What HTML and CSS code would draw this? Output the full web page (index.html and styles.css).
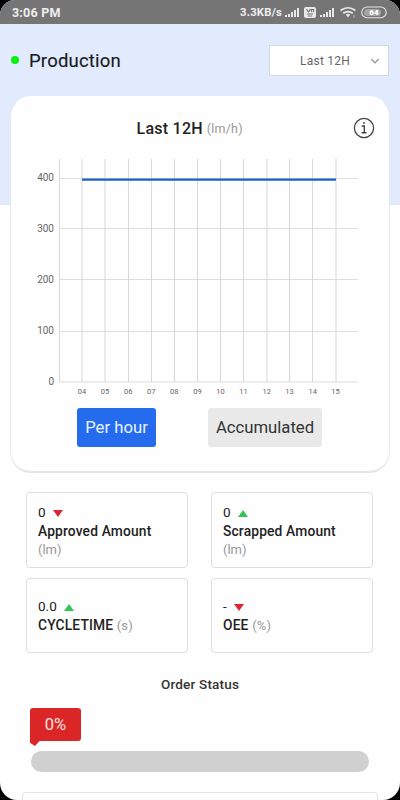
FILE: index.html
```html
<!DOCTYPE html>
<html lang="en">
<head>
<meta charset="utf-8">
<meta name="viewport" content="width=device-width">
<title>Production</title>
<link rel="stylesheet" href="styles.css">
</head>
<body>
<div class="screen">
  <header class="status">
    <span class="clock">3:06 PM</span>
    <div class="indicators">
      <span class="speed">3.3KB/s</span>
      <svg class="system-icons" width="103" height="16" viewBox="0 0 103 16">
        <g fill="#e8e8e8">
          <path d="M1 11h2v2H1zM4 10h2v3H4zM7 8h2v5H7zM10 6h2v7h-2zM13 4h2v9h-2z"/>
          <rect x="20" y="3" width="12" height="11" rx="2"/>
          <path d="M36 11h2v2h-2zM39 10h2v3h-2zM42 8h2v5h-2zM45 6h2v7h-2zM48 4h2v9h-2z"/>
          <path d="M61.800 10.500 64 13.500l2.200-3q-2.200-1.500-4.400 0z"/>
        </g>
        <path d="m22.500 5 2 3 2-3M27.500 8V5.500h2V8M23 10h6M24 12h4" fill="none" stroke="#777" stroke-width="1.200"/>
        <path d="M56.500 6.500q7.500-5.500 15 0M59.200 9.300q4.800-3.500 9.600 0" fill="none" stroke="#e8e8e8" stroke-width="1.700"/>
        <path d="M70 11v3" stroke="#bbb"/>
        <rect x="77.700" y="3" width="24.500" height="10.800" rx="5.400" fill="none" stroke="#e8e8e8" stroke-width="1.100"/>
        <rect x="80" y="5" width="17" height="7" rx="3.500" fill="#a5a5a5"/>
        <text x="90" y="11.300" text-anchor="middle" class="battery">64</text>
      </svg>
    </div>
  </header>
  <section class="title-bar">
    <span class="dot"></span>
    <h1>Production</h1>
    <div class="select"><span>Last 12H</span>
      <svg width="10" height="6" viewBox="0 0 10 6"><path d="m1.200 1 3.800 3.800L8.800 1" fill="none" stroke="#999" stroke-width="1.300"/></svg>
    </div>
  </section>
  <main>
    <section class="chart-card">
      <div class="chart-head">
        <h2>Last 12H</h2><span class="unit">(lm/h)</span>
        <svg class="info" width="22" height="22" viewBox="0 0 22 22" fill="none" stroke="#444">
          <circle cx="11" cy="11" r="9.600" stroke-width="1.300"/>
          <path d="M8.700 9h2.600v6.500M8.500 15.700h5" stroke-width="1.400"/>
          <circle cx="11" cy="6" r=".9" fill="#444" stroke="none"/>
        </svg>
      </div>
      <svg class="chart" width="378" height="250" viewBox="11 150 378 250">
        <path class="grid-h" d="M59 178.500h299M59 228.500h299M59 279.500h299M59 331.500h299M59 382h299"/>
        <path class="grid-v" d="M59.500 159v223M82 159v223M105 159v223M128.500 159v223M151.500 159v223M174.500 159v223M197.500 159v223M220.500 159v223M243.500 159v223M267 159v223M289.500 159v223M312.500 159v223M336 159v223"/>
        <path class="series" d="M82 179.700h254"/>
        <g class="y-labels">
          <text x="54" y="180.800">400</text><text x="54" y="231.800">300</text><text x="54" y="283">200</text><text x="54" y="334.300">100</text><text x="54" y="385.300">0</text>
        </g>
        <g class="x-labels">
          <text x="82" y="393.700">04</text><text x="105" y="393.700">05</text><text x="128.300" y="393.700">06</text><text x="151.300" y="393.700">07</text><text x="174.300" y="393.700">08</text><text x="197.500" y="393.700">09</text><text x="220.500" y="393.700">10</text><text x="243.500" y="393.700">11</text><text x="266.700" y="393.700">12</text><text x="289.500" y="393.700">13</text><text x="312.700" y="393.700">14</text><text x="335.500" y="393.700">15</text>
        </g>
      </svg>
      <div class="buttons">
        <button class="btn primary">Per hour</button>
        <button class="btn">Accumulated</button>
      </div>
    </section>
    <section class="stats">
      <article class="stat"><div class="value">0<i class="down"></i></div><div class="name">Approved Amount</div><div class="sub">(lm)</div></article>
      <article class="stat"><div class="value">0<i class="up"></i></div><div class="name">Scrapped Amount</div><div class="sub">(lm)</div></article>
      <article class="stat"><div class="value">0.0<i class="up"></i></div><div class="name">CYCLETIME <span class="sub">(s)</span></div></article>
      <article class="stat"><div class="value">-<i class="down"></i></div><div class="name">OEE <span class="sub">(%)</span></div></article>
    </section>
    <section class="order">
      <h3>Order Status</h3>
      <div class="badge">0%</div>
      <div class="progress"></div>
      <div class="next-card"></div>
    </section>
  </main>
</div>
</body>
</html>
```

FILE: styles.css
```css
* { box-sizing: border-box; }
body { margin: 0; background: #000; font-family: Roboto, "Liberation Sans", sans-serif; }
h1, h2, h3 { margin: 0; }
svg { display: block; }
.screen {
  width: 400px; height: 800px; overflow: hidden; border-radius: 15px 15px 17px 17px;
  background: linear-gradient(#e1ebfd 205px, #fefefe 205px);
}
.status {
  height: 24px; padding: 0 13px 0 12px; display: flex; align-items: center; justify-content: space-between;
  background: #757575; color: #eee;
}
.clock { font-size: 12.5px; font-weight: 700; letter-spacing: .2px; }
.indicators { display: flex; align-items: center; }
.speed { width: 44px; font-size: 11.300px; font-weight: 700; letter-spacing: .2px; }
.battery { font-size: 8px; font-weight: 900; fill: #fff; }
.title-bar { height: 72px; padding: 0 11px 0 11px; display: flex; align-items: center; }
.dot { width: 8px; height: 8px; border-radius: 50%; background: #09f20d; }
h1 { margin: 2px 0 0 10px; font-size: 18.5px; font-weight: 400; letter-spacing: .2px; color: #181b22; -webkit-text-stroke: .15px #181b22; }
.select {
  margin-left: auto; width: 120px; height: 31px; padding: 1px 8px 0 30px; display: flex; align-items: center;
  justify-content: space-between; background: #fff; border: 1px solid #d3d7df; font-size: 12px; letter-spacing: .25px; color: #666;
}
.chart-card {
  margin: 0 10px; height: 377px; border-radius: 21px; background: #fefefe;
  border: 1px solid #e8eaee; border-top-color: #fefefe; border-bottom: 2px solid #e4e4e4;
}
.chart-head { height: 53px; padding: 9px 14px 0 125.500px; display: flex; align-items: center; }
h2 { font-size: 16px; font-weight: 500; letter-spacing: .25px; color: #222; }
.unit { margin-left: 4px; font-size: 12.500px; color: #999; letter-spacing: .2px; }
.info { margin-left: auto; }
.grid-h { stroke: #ddd; fill: none; }
.grid-v { stroke: #d8d8d8; fill: none; }
.series { stroke: #1f5fc8; stroke-width: 2.200; }
.y-labels { font-size: 10px; fill: #666; text-anchor: end; }
.x-labels { font-size: 7.500px; fill: #666; text-anchor: middle; }
.buttons { display: flex; gap: 52px; padding-left: 66px; margin-top: 8px; }
.btn { width: 114px; height: 39px; padding: 0; border: 0; border-radius: 3px; background: #e9e9e9; color: #333; font: 400 16.700px Roboto, sans-serif; }
.btn.primary { width: 79px; background: #246bee; color: #eaf2ff; }
.stats { display: grid; grid-template-columns: 162px 162px; grid-template-rows: 76px 75px; gap: 10px 23px; margin: 19px 0 0 26px; }
.stat { border: 1px solid #dedede; border-radius: 4px; padding: 1px 0 0 11px; display: flex; flex-direction: column; justify-content: center; }
.value { display: flex; align-items: center; font-size: 13.500px; line-height: 19px; color: #222; }
.value i { width: 0; margin: 2px 0 0 7px; border: 5px solid transparent; }
.up { border-top: 0 !important; border-bottom: 7px solid #36c454 !important; }
.down { border-bottom: 0 !important; border-top: 7px solid #d92736 !important; }
.name { font-size: 13.800px; font-weight: 500; line-height: 19px; letter-spacing: .15px; color: #222; white-space: pre; }
.sub { font-size: 13px; font-weight: 400; line-height: 18px; color: #999; }
.order { padding: 23px 31px 0; }
h3 { font-size: 13.500px; line-height: 16px; font-weight: 500; letter-spacing: .2px; color: #333; text-align: center; }
.badge {
  position: relative; width: 51px; height: 33px; margin: 16px 0 0 -1px; border-radius: 3px; background: #db2627;
  color: #ffe2e2; font-size: 16.500px; line-height: 33px; text-align: center;
}
.badge::after {
  content: ""; position: absolute; left: 0; top: 29px; width: 10px; height: 9px; background: #db2627;
  clip-path: polygon(0 0, 100% 40%, 50% 100%, 0 65%);
}
.progress { height: 21px; margin-top: 10px; border-radius: 11px; background: #d0d0d0; }
.next-card { height: 12px; margin: 20px -9px 0; border: 1px solid #e4e4e4; border-bottom: 0; border-radius: 4px 4px 0 0; }
```
